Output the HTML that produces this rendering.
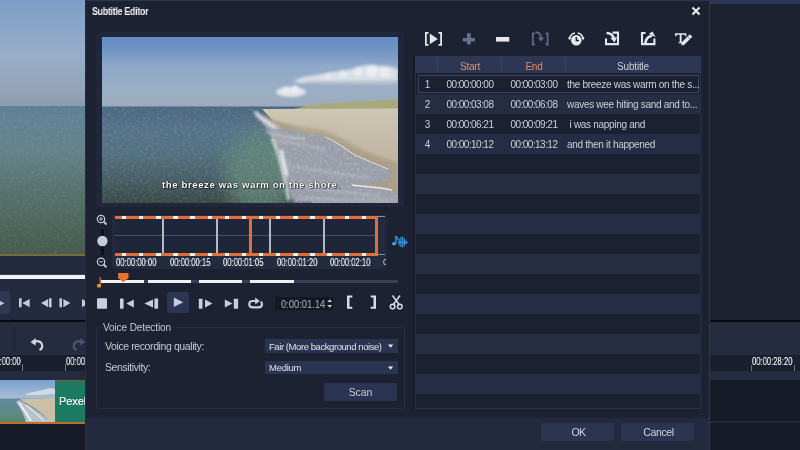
<!DOCTYPE html>
<html><head><meta charset="utf-8">
<style>
*{margin:0;padding:0;box-sizing:border-box}
html,body{width:800px;height:450px;overflow:hidden;background:#1c2030;font-family:"Liberation Sans",sans-serif}
.a{position:absolute}
.t{position:absolute;white-space:nowrap;line-height:1;will-change:transform}
</style></head><body>
<!-- LEFT BACKGROUND APP -->
<div class="a" style="left:0;top:0;width:85px;height:450px;background:#1b2030"></div>
<!-- left video -->
<svg class="a" style="left:0;top:0" width="85" height="256" viewBox="0 0 85 256">
  <defs>
    <linearGradient id="lsky" x1="0" y1="0" x2="0" y2="1">
      <stop offset="0" stop-color="#7e9ec8"/><stop offset="0.5" stop-color="#98aec8"/><stop offset="0.85" stop-color="#94a4b8"/><stop offset="1" stop-color="#8c9cb0"/>
    </linearGradient>
    <linearGradient id="lsea" x1="0" y1="0" x2="0" y2="1">
      <stop offset="0" stop-color="#5e7e94"/><stop offset="0.1" stop-color="#628294"/><stop offset="0.3" stop-color="#64828a"/><stop offset="0.56" stop-color="#56726e"/><stop offset="0.88" stop-color="#4a6056"/><stop offset="1" stop-color="#465a4e"/>
    </linearGradient>
  </defs>
  <rect width="85" height="107" fill="url(#lsky)"/>
  <rect y="106" width="85" height="150" fill="url(#lsea)"/>
  <rect y="106" width="85" height="150" fill="#fff" filter="url(#noise)" opacity="0.12"/>
  <rect y="254" width="85" height="2" fill="#7a6a3a"/>
</svg>
<div class="a" style="left:0;top:256px;width:85px;height:18px;background:#232a3e"></div>
<div class="a" style="left:0;top:274px;width:85px;height:1px;background:#3a4257"></div>
<div class="a" style="left:0;top:275px;width:85px;height:4px;background:#f2f2f4"></div>
<div class="a" style="left:0;top:279px;width:85px;height:41px;background:#242b3f"></div>
<div class="a" style="left:0;top:291px;width:10px;height:23px;background:#2e3853;border-radius:0 3px 3px 0"></div>
<div class="a" style="left:0;top:319.5px;width:85px;height:2px;background:#080a10"></div>
<div class="a" style="left:0;top:322px;width:85px;height:33px;background:#262c40"></div>
<div class="a" style="left:14px;top:326px;width:1px;height:26px;background:#1c2132"></div>
<div class="a" style="left:0;top:355px;width:85px;height:16px;background:#1a1f2e"></div>
<div class="a" style="left:0;top:371px;width:85px;height:9px;background:#252b3e"></div>
<div class="a" style="left:0;top:380px;width:85px;height:42px;background:#1d7a62"></div>
<div class="a" style="left:0;top:422px;width:85px;height:1.5px;background:#b8702e"></div>
<div class="a" style="left:0;top:379.5px;width:85px;height:1px;background:#7a5a3a"></div>
<div class="a" style="left:0;top:423.5px;width:85px;height:27px;background:#171b28"></div>


<!-- left controls -->
<svg class="a" style="left:0;top:285px" width="85" height="90" viewBox="0 285 85 90">
  <g fill="#c6cbda">
    <path d="M-4 299l8.5 4.2l-8.5 4.2z"/>
    <rect x="19" y="298.3" width="2.6" height="9" rx="0.5"/>
    <path d="M29.6 299v8.2l-7.2-4.1z"/>
    <path d="M41 303.1l7.2-4.1v8.2z"/>
    <rect x="49" y="298.3" width="2.6" height="9" rx="0.5"/>
    <rect x="59.4" y="298.3" width="2.6" height="9" rx="0.5"/>
    <path d="M63.4 299l7 4.1l-7 4.1z"/>
    <path d="M82 299l7 4.1l-7 4.1z"/>
  </g>
  <g fill="none" stroke="#d4d8e2" stroke-width="2.2">
    <path d="M34 342c3-1.5 7-1 8 2.5c0.8 2.5-0.5 4.5-2.5 5.5"/>
  </g>
  <path d="M30.5 342.3l5.2-4.2v7.5z" fill="#d4d8e2"/>
  <g fill="none" stroke="#4a5570" stroke-width="2.2">
    <path d="M82 342c-3-1.5-7-1-8 2.5c-0.8 2.5 0.5 4.5 2.5 5.5"/>
  </g>
  <path d="M85.5 342.3l-5.2-4.2v7.5z" fill="#4a5570"/>
  <rect x="22" y="364" width="1" height="7" fill="#6a7288"/>
  <rect x="65" y="364" width="1" height="7" fill="#6a7288"/>
</svg>
<div class="t" style="left:-9.5px;top:356.5px;font-size:10px;color:#dfe2e8;transform:scaleX(0.765);transform-origin:left;text-shadow:0 0 0.5px #dfe2e8">00:00:00</div>
<div class="t" style="left:66px;top:356.5px;font-size:10px;color:#dfe2e8;transform:scaleX(0.765);transform-origin:left;text-shadow:0 0 0.5px #dfe2e8">00:00:00</div>
<!-- left clip -->
<svg class="a" style="left:0;top:380px" width="55" height="42" viewBox="0 380 55 42">
  <defs>
    <linearGradient id="csky" x1="0" y1="0" x2="0" y2="1">
      <stop offset="0" stop-color="#78a0d2"/><stop offset="1" stop-color="#aebed2"/>
    </linearGradient>
    <linearGradient id="csea" x1="0" y1="0" x2="0" y2="1">
      <stop offset="0" stop-color="#5f8aa0"/><stop offset="0.6" stop-color="#5e8c88"/><stop offset="1" stop-color="#58866c"/>
    </linearGradient>
  </defs>
  <rect x="0" y="380" width="55" height="19" fill="url(#csky)"/>
  <path d="M26 394 C32 392 38 391 43 390 C47 388 52 388 55 389 L55 394 C45 395 35 395 26 395 Z" fill="#dfe4ec" opacity="0.8" filter="url(#b05)"/>
  <rect x="0" y="398.5" width="55" height="23.5" fill="url(#csea)"/>
  <path d="M20 399 L55 398 L55 422 L50 422 C44 414 34 407 22 401 Z" fill="#cbbfa4" filter="url(#b05)"/>
  <path d="M19 400 C28 405 40 412 51 422 L26 422 C24 415 21 408 16 402 Z" fill="#b8c0c8" filter="url(#b05)"/>
  <path d="M19 403 C23 408 27 414 31 421" stroke="#eef0f2" stroke-width="2" fill="none" filter="url(#b05)"/>
  <path d="M26 405 C32 410 38 415 44 421" stroke="#e4e8ec" stroke-width="1.2" fill="none" filter="url(#b05)"/>
</svg>
<div class="t" style="left:59px;top:396px;font-size:11px;color:#e6eeea;letter-spacing:-0.1px;text-shadow:0 0 0.4px #e6eeea">Pexels</div>

<!-- RIGHT BACKGROUND APP -->
<div class="a" style="left:710px;top:0;width:90px;height:4px;background:#2c3656"></div>
<div class="a" style="left:710px;top:4px;width:90px;height:316px;background:#1c2130"></div>
<div class="a" style="left:710px;top:319.5px;width:90px;height:2px;background:#080a10"></div>
<div class="a" style="left:710px;top:322px;width:90px;height:33px;background:#262c40"></div>
<div class="a" style="left:710px;top:355px;width:90px;height:16px;background:#1a1f2e"></div>
<div class="a" style="left:710px;top:371px;width:90px;height:9px;background:#252b3e"></div>
<div class="a" style="left:710px;top:380px;width:90px;height:70px;background:#161b28"></div>


<div class="t" style="left:752px;top:356.5px;font-size:10px;color:#dfe2e8;transform:scaleX(0.765);transform-origin:left;text-shadow:0 0 0.5px #dfe2e8">00:00:28:20</div>
<div class="a" style="left:751px;top:365px;width:1px;height:6px;background:#6a7288"></div>
<div class="a" style="left:794px;top:365px;width:1px;height:6px;background:#6a7288"></div>
<div class="a" style="left:710px;top:421px;width:90px;height:2px;background:#252b3c"></div>

<!-- DIALOG -->
<div class="a" style="left:85px;top:0;width:625px;height:450px;background:#1d2233;border-top:1.5px solid #2d3556;border-left:1px solid #262c44;border-right:1px solid #2e3656"></div>
<div class="t" style="left:92px;top:7px;font-size:10px;font-weight:bold;color:#f4f4f8;letter-spacing:-0.3px;transform:scaleX(0.88);transform-origin:left">Subtitle Editor</div>

<!-- video frame -->
<div class="a" style="left:96px;top:32px;width:308px;height:175px;background:#21263a;border-radius:3px"></div>
<svg class="a" style="left:102px;top:37px" width="296" height="166" viewBox="102 37 296 166">
  <defs>
    <linearGradient id="vsky" x1="0" y1="0" x2="0" y2="1">
      <stop offset="0" stop-color="#668ec4"/><stop offset="0.15" stop-color="#6c92c4"/><stop offset="0.4" stop-color="#8ea8ca"/><stop offset="0.75" stop-color="#9aaec4"/><stop offset="1" stop-color="#9eacbc"/>
    </linearGradient>
    <linearGradient id="vsea" x1="0" y1="0" x2="0" y2="1">
      <stop offset="0" stop-color="#4c6882"/><stop offset="0.25" stop-color="#56728a"/><stop offset="0.5" stop-color="#52707e"/><stop offset="0.75" stop-color="#485e66"/><stop offset="0.9" stop-color="#3e5050"/><stop offset="1" stop-color="#3a4a42"/>
    </linearGradient>
    <linearGradient id="vsand" x1="0" y1="0" x2="0" y2="1">
      <stop offset="0" stop-color="#cfc7b5"/><stop offset="0.4" stop-color="#c2b9a6"/><stop offset="1" stop-color="#b2a68c"/>
    </linearGradient>
    <filter id="b1" x="-20%" y="-50%" width="140%" height="200%"><feGaussianBlur stdDeviation="1.5"/></filter>
    <filter id="b2" x="-30%" y="-30%" width="160%" height="160%"><feGaussianBlur stdDeviation="4"/></filter>
    <filter id="b3" x="-50%" y="-50%" width="200%" height="200%"><feGaussianBlur stdDeviation="9"/></filter>
    <filter id="b05"><feGaussianBlur stdDeviation="0.7"/></filter>
    <filter id="noise" x="0" y="0" width="100%" height="100%">
      <feTurbulence type="fractalNoise" baseFrequency="0.35" numOctaves="2" seed="3"/>
      <feColorMatrix values="0 0 0 0 1  0 0 0 0 1  0 0 0 0 1  0 0 0 1.6 -0.75"/>
      <feComposite in2="SourceGraphic" operator="in"/>
    </filter>
    <filter id="noise2" x="0" y="0" width="100%" height="100%">
      <feTurbulence type="fractalNoise" baseFrequency="0.12 0.4" numOctaves="2" seed="7"/>
      <feColorMatrix values="0 0 0 0 0.1  0 0 0 0 0.15  0 0 0 0 0.25  0 0 0 -2.2 1.0"/>
      <feComposite in2="SourceGraphic" operator="in"/>
    </filter>
  </defs>
  <rect x="102" y="37" width="296" height="71" fill="url(#vsky)"/>
  <rect x="102" y="106.5" width="296" height="97" fill="url(#vsea)"/>
  <!-- lighter sea patch near foam -->
  <ellipse cx="262" cy="172" rx="38" ry="42" fill="#668a7a" opacity="0.75" filter="url(#b3)"/>
  <!-- clouds -->
  <g filter="url(#b1)" opacity="0.95">
    <path d="M293 81 C300 77 312 76 322 74 C332 71 345 71 352 69 C360 65 372 64 380 66 C390 66 398 68 398 70 L398 84 C380 85 340 84 300 83 Z" fill="#dde2ea"/>
    <circle cx="372" cy="71" r="6" fill="#f2f3f6"/>
    <circle cx="385" cy="72" r="5.5" fill="#eef0f4"/>
    <circle cx="358" cy="72" r="4.5" fill="#eef0f4"/>
    <circle cx="343" cy="74" r="4" fill="#eceef2"/>
    <circle cx="328" cy="76" r="3.5" fill="#e8ebf0"/>
    <path d="M305 83 C330 85 370 86 398 84 L398 80 C370 81 330 81 305 81 Z" fill="#b8c0cc"/>
    <ellipse cx="291" cy="92" rx="15" ry="5" fill="#e2e6ec"/>
    <circle cx="286" cy="90.5" r="4" fill="#eef0f4"/>
    <circle cx="295" cy="90" r="4.5" fill="#eef0f4"/>
  </g>
  <!-- dunes -->
  <path d="M292 109.5 C310 104 340 102 370 101 C385 100 395 99 398 99 L398 110 L292 110 Z" fill="#a9a87c" filter="url(#b05)"/>
  <!-- sand -->
  <path d="M262 109 L398 108.5 L398 203 L312 203 C302 170 292 140 262 109 Z" fill="url(#vsand)" filter="url(#b05)"/>
  <!-- wet sand -->
  <path d="M262 114 C275 122 292 126 312 128 C328 130 340 136 354 145 C367 152 380 157 398 162 L398 195 L300 195 Z" fill="#ab9f86" filter="url(#b1)"/>
  <path d="M295 127 C315 128 332 131 345 138 C360 146 380 150 398 158" stroke="#c4bba8" stroke-width="6" fill="none" filter="url(#b2)" opacity="0.6"/>
  <!-- foam -->
  <path d="M252 110 C262 118 268 124 278 128 C295 132 312 133 325 137 C338 142 346 150 355 155 C366 160 378 165 388 169 C393 173 393 179 386 182 C372 184 360 184 352 185 C366 187 380 187 392 190 C396 193 398 196 398 203 L294 203 C288 190 284 175 281 160 C278 145 268 128 252 110 Z" fill="#999eaa" filter="url(#b1)"/>
  <path d="M252 110 C262 118 268 124 278 128 C295 132 312 133 325 137 C338 142 346 150 355 155 C366 160 378 165 388 169 C393 173 393 179 386 182 C372 184 360 184 352 185 C366 187 380 187 392 190 C396 193 398 196 398 203 L294 203 C288 190 284 175 281 160 C278 145 268 128 252 110 Z" fill="#fff" filter="url(#noise)" opacity="0.3"/>
  <path d="M255 112 C262 118 268 124 276 128" stroke="#dfe3e8" stroke-width="3" fill="none" filter="url(#b1)"/>
  <path d="M272 138 C277 148 280 160 283 172 C285 180 287 190 289 200" stroke="#e4e8ec" stroke-width="2.5" fill="none" filter="url(#b1)"/>
  <path d="M352 185 C366 187 380 187 392 190" stroke="#e6e8ec" stroke-width="1.5" fill="none" filter="url(#b05)"/>
  <path d="M325 137 C338 142 346 150 355 155 C366 160 378 165 388 169" stroke="#d0d4dc" stroke-width="1.2" fill="none" filter="url(#b05)"/>
  <g stroke="#e8ebf0" fill="none" filter="url(#b1)" opacity="0.6">
    <path d="M256 116 C264 121 272 125 280 128" stroke-width="1.8"/>
    <path d="M266 132 C278 136 292 138 305 139" stroke-width="1.5"/>
    <path d="M275 140 C290 143 310 146 325 150" stroke-width="1"/>
    <path d="M288 165 C310 170 340 175 370 177" stroke-width="1"/>
    <path d="M292 185 C320 190 350 193 380 196" stroke-width="1.2"/>
    <path d="M300 198 C330 200 360 201 395 200" stroke-width="1"/>
  </g>
  <path d="M281 150 C283 160 285 168 287 176" stroke="#f4f5f7" stroke-width="3" fill="none" filter="url(#b1)"/>
  <!-- sea noise -->
  <path d="M102 107 L252 107 C268 128 278 145 281 160 C284 175 288 190 294 203 L102 203 Z" fill="#fff" filter="url(#noise)" opacity="0.18"/>
  <path d="M102 107 L252 107 C268 128 278 145 281 160 C284 175 288 190 294 203 L102 203 Z" fill="#fff" filter="url(#noise2)" opacity="0.5"/>
  
</svg>
<div class="t" style="left:162px;top:180px;font-size:9.6px;font-weight:bold;color:#fff;letter-spacing:0.6px;text-shadow:0 0 1px #000,0 0 1px #000,1px 1px 1px rgba(0,0,0,.5)">the breeze was warm on the shore.</div>

<!-- TABLE -->
<div class="a" style="left:413px;top:56px;width:2px;height:353px;background:#181c2a"></div>
<div class="a" style="left:415px;top:56px;width:286px;height:353px;background:#1c2132;border:1px solid #2a3148"></div>
<div class="a" style="left:415px;top:56px;width:286px;height:17px;background:#2d3754"></div>
<div class="a" style="left:416px;top:74px;width:284px;height:20px;background:#1c2132"></div>
<div class="a" style="left:416px;top:94px;width:284px;height:20px;background:#252d42"></div>
<div class="a" style="left:416px;top:114px;width:284px;height:20px;background:#1c2132"></div>
<div class="a" style="left:416px;top:134px;width:284px;height:20px;background:#252d42"></div>
<div class="a" style="left:416px;top:154px;width:284px;height:20px;background:#1c2132"></div>
<div class="a" style="left:416px;top:174px;width:284px;height:20px;background:#252d42"></div>
<div class="a" style="left:416px;top:194px;width:284px;height:20px;background:#1c2132"></div>
<div class="a" style="left:416px;top:214px;width:284px;height:20px;background:#252d42"></div>
<div class="a" style="left:416px;top:234px;width:284px;height:20px;background:#1c2132"></div>
<div class="a" style="left:416px;top:254px;width:284px;height:20px;background:#252d42"></div>
<div class="a" style="left:416px;top:274px;width:284px;height:20px;background:#1c2132"></div>
<div class="a" style="left:416px;top:294px;width:284px;height:20px;background:#252d42"></div>
<div class="a" style="left:416px;top:314px;width:284px;height:20px;background:#1c2132"></div>
<div class="a" style="left:416px;top:334px;width:284px;height:20px;background:#252d42"></div>
<div class="a" style="left:416px;top:354px;width:284px;height:20px;background:#1c2132"></div>
<div class="a" style="left:416px;top:374px;width:284px;height:20px;background:#252d42"></div>
<div class="a" style="left:416px;top:394px;width:284px;height:13px;background:#1c2132"></div>
<div class="a" style="left:418px;top:75px;width:281px;height:18px;border:1px solid #3b4563"></div>
<div class="a" style="left:437px;top:57px;width:1px;height:15px;background:#3a4464"></div>
<div class="a" style="left:501px;top:57px;width:1px;height:15px;background:#3a4464"></div>
<div class="a" style="left:565px;top:57px;width:1px;height:15px;background:#3a4464"></div>
<div class="t" style="left:438px;top:62px;width:64px;text-align:center;font-size:10px;color:#e48c66;letter-spacing:-0.2px">Start</div>
<div class="t" style="left:502px;top:62px;width:64px;text-align:center;font-size:10px;color:#e48c66;letter-spacing:-0.2px">End</div>
<div class="t" style="left:566px;top:62px;width:134px;text-align:center;font-size:10px;color:#c8d0dc;letter-spacing:-0.2px">Subtitle</div>
<div class="t" style="left:416px;top:80px;width:23px;text-align:center;font-size:10px;color:#c8d0dc">1</div>
<div class="t" style="left:438px;top:80px;width:64px;text-align:center;font-size:10px;color:#c8d0dc;letter-spacing:-0.55px">00:00:00:00</div>
<div class="t" style="left:502px;top:80px;width:64px;text-align:center;font-size:10px;color:#c8d0dc;letter-spacing:-0.55px">00:00:03:00</div>
<div class="t" style="left:567px;top:80px;font-size:10px;color:#c8d0dc;letter-spacing:-0.3px;white-space:pre">the breeze was warm on the s...</div>
<div class="t" style="left:416px;top:100px;width:23px;text-align:center;font-size:10px;color:#c8d0dc">2</div>
<div class="t" style="left:438px;top:100px;width:64px;text-align:center;font-size:10px;color:#c8d0dc;letter-spacing:-0.55px">00:00:03:08</div>
<div class="t" style="left:502px;top:100px;width:64px;text-align:center;font-size:10px;color:#c8d0dc;letter-spacing:-0.55px">00:00:06:08</div>
<div class="t" style="left:567px;top:100px;font-size:10px;color:#c8d0dc;letter-spacing:-0.3px;white-space:pre">waves wee hiting sand and to...</div>
<div class="t" style="left:416px;top:120px;width:23px;text-align:center;font-size:10px;color:#c8d0dc">3</div>
<div class="t" style="left:438px;top:120px;width:64px;text-align:center;font-size:10px;color:#c8d0dc;letter-spacing:-0.55px">00:00:06:21</div>
<div class="t" style="left:502px;top:120px;width:64px;text-align:center;font-size:10px;color:#c8d0dc;letter-spacing:-0.55px">00:00:09:21</div>
<div class="t" style="left:567px;top:120px;font-size:10px;color:#c8d0dc;letter-spacing:-0.3px;white-space:pre"> i was napping and</div>
<div class="t" style="left:416px;top:140px;width:23px;text-align:center;font-size:10px;color:#c8d0dc">4</div>
<div class="t" style="left:438px;top:140px;width:64px;text-align:center;font-size:10px;color:#c8d0dc;letter-spacing:-0.55px">00:00:10:12</div>
<div class="t" style="left:502px;top:140px;width:64px;text-align:center;font-size:10px;color:#c8d0dc;letter-spacing:-0.55px">00:00:13:12</div>
<div class="t" style="left:567px;top:140px;font-size:10px;color:#c8d0dc;letter-spacing:-0.3px;white-space:pre">and then it happened</div>



<!-- TOOLBAR ICONS -->
<svg class="a" style="left:420px;top:28px" width="280" height="22" viewBox="420 28 280 22">
  <g fill="#e4e6ee">
    <!-- [>] -->
    <path d="M425 32h3.5v1.8h-1.7v10.2h1.7v1.8h-3.5z"/>
    <path d="M442 32h-3.5v1.8h1.7v10.2h-1.7v1.8h3.5z"/>
    <path d="M429.8 33.5l8 5.4l-8 5.4z"/>
    <!-- minus -->
    <rect x="496" y="37" width="13.3" height="4.6"/>
  </g>
  <g fill="#66718c">
    <path d="M467 33.3h3.8v4.6h4.1v3.6h-4.1v3.1h-3.8v-3.1h-4.2v-3.6h4.2z"/>
  </g>
  <g fill="none" stroke="#5f6a85" stroke-width="1.8">
    <path d="M534.8 33.5h-2v11h2M545.6 33.5h2v11h-2"/>
    <path d="M535.5 32.5c3.5-0.5 5.5 1.5 5.5 5.5"/>
  </g>
  <path fill="#5f6a85" d="M537.8 37.5h6.4l-3.2 4z"/>
  <!-- alarm clock -->
  <g>
    <circle cx="576.3" cy="40.2" r="5.3" fill="#e4e6ee"/>
    <path d="M576.3 37v3.5h2.6" stroke="#1d2233" stroke-width="1.4" fill="none"/>
    <path d="M569.5 38.5c0.8-3 3-5 5.5-5.5" stroke="#e4e6ee" stroke-width="1.7" fill="none"/>
    <path d="M583.2 38.5c-0.8-3-3-5-5.5-5.5" stroke="#e4e6ee" stroke-width="1.7" fill="none"/>
    <path d="M568 37.5l3.3 0.3l-1.9 2.4z M584.6 37.5l-3.3 0.3l1.9 2.4z" fill="#e4e6ee"/>
  </g>
  <!-- import -->
  <g fill="none" stroke="#e4e6ee" stroke-width="2.1">
    <path d="M606 38.5v5.6h12v-11.5h-5.5"/>
    <path d="M606.5 33c3.5 0 6.5 2 7.5 6" stroke-width="2.4"/>
  </g>
  <path fill="#e4e6ee" d="M610.3 37.8l6.8 -0.6l-2.6 5.4z"/>
  <!-- export -->
  <g fill="none" stroke="#e4e6ee" stroke-width="2.1">
    <path d="M645.5 33h-3.5v11.1h12.4v-5.6"/>
    <path d="M645.5 43.2c0.3-4.2 2.6-6.8 6.5-7.4" stroke-width="2.6"/>
  </g>
  <path fill="#e4e6ee" d="M648.8 33.8l3.8-2.2l3 5.6z"/>
  <!-- T pen -->
  <g fill="#e4e6ee">
    <path d="M675 33.2h11.3v3h-1.2l-0.5-1.5h-3v7.2l1.3 0.6v0.7h-4.5v-0.7l1.3-0.6v-7.2h-3l-0.5 1.5h-1.2z"/>
  </g>
  <path d="M682.3 44.3l8.8-8.8" stroke="#e4e6ee" stroke-width="3.6" fill="none"/>
  <path d="M688 37l2.2 2.2" stroke="#1d2233" stroke-width="0.8" fill="none" opacity="0.6"/>
  <path d="M681 45.5l1.2-3.2l2 2z" fill="#e4e6ee"/>
</svg>
<!-- close X -->
<svg class="a" style="left:690px;top:5px" width="12" height="12" viewBox="0 0 12 12">
  <path d="M2.5 2.5l7 7M9.5 2.5l-7 7" stroke="#f0f0f4" stroke-width="2"/>
</svg>

<!-- TIMELINE -->
<div class="a" style="left:112px;top:215px;width:275px;height:54px;background:#242b3f;border-radius:0 0 5px 5px"></div>
<div class="a" style="left:115px;top:219px;width:262px;height:34px;background:#20263a"></div>
<div class="a" style="left:115px;top:235px;width:262px;height:1px;background:#495168"></div>
<div class="a" style="left:115px;top:215.5px;width:262px;height:3.5px;background:repeating-linear-gradient(90deg,#e0703a 0,#e0703a 7px,#f0f0f2 7px,#f0f0f2 11.3px,#e0703a 11.3px,#e0703a 17.12px)"></div>
<div class="a" style="left:115px;top:252.5px;width:262px;height:3.5px;background:repeating-linear-gradient(90deg,#e0703a 0,#e0703a 7px,#f0f0f2 7px,#f0f0f2 11.3px,#e0703a 11.3px,#e0703a 17.12px)"></div>
<div class="a" style="left:162px;top:219px;width:2px;height:34px;background:#b4b8c4"></div>
<div class="a" style="left:216px;top:219px;width:2px;height:34px;background:#b4b8c4"></div>
<div class="a" style="left:269px;top:219px;width:2px;height:34px;background:#b4b8c4"></div>
<div class="a" style="left:323px;top:219px;width:2px;height:34px;background:#b4b8c4"></div>
<div class="a" style="left:248.5px;top:215.5px;width:3.5px;height:40.5px;background:#e0703a"></div>
<div class="a" style="left:374.5px;top:215.5px;width:3.5px;height:40.5px;background:#e0703a"></div>
<div class="a" style="left:378px;top:216px;width:7px;height:1px;background:#8a90a0"></div>
<div class="a" style="left:378px;top:254px;width:7px;height:1px;background:#8a90a0"></div>
<div class="a" style="left:385px;top:216px;width:1px;height:39px;background:#1c2132"></div>
<div class="t" style="left:116px;top:257.5px;font-size:10px;color:#e2e5ea;letter-spacing:0;transform:scaleX(0.765);transform-origin:left;text-shadow:0 0 0.5px #e2e5ea">00:00:00:00</div>
<div class="t" style="left:169.5px;top:257.5px;font-size:10px;color:#e2e5ea;letter-spacing:0;transform:scaleX(0.765);transform-origin:left;text-shadow:0 0 0.5px #e2e5ea">00:00:00:15</div>
<div class="t" style="left:223px;top:257.5px;font-size:10px;color:#e2e5ea;letter-spacing:0;transform:scaleX(0.765);transform-origin:left;text-shadow:0 0 0.5px #e2e5ea">00:00:01:05</div>
<div class="t" style="left:276.5px;top:257.5px;font-size:10px;color:#e2e5ea;letter-spacing:0;transform:scaleX(0.765);transform-origin:left;text-shadow:0 0 0.5px #e2e5ea">00:00:01:20</div>
<div class="t" style="left:330px;top:257.5px;font-size:10px;color:#e2e5ea;letter-spacing:0;transform:scaleX(0.765);transform-origin:left;text-shadow:0 0 0.5px #e2e5ea">00:00:02:10</div>
<div class="a" style="left:383px;top:257px;width:3px;height:10px;overflow:hidden"><div class="t" style="left:0;top:0.5px;font-size:9px;color:#d2d6de">0</div></div>

<!-- zoom slider -->
<svg class="a" style="left:92px;top:208px" width="20" height="64" viewBox="92 208 20 64">
  <g fill="none" stroke="#c8ccd8">
    <circle cx="101" cy="219" r="3.7" stroke-width="1.2"/>
    <path d="M103.7 221.7l2.8 2.8" stroke-width="1.9"/>
    <path d="M99 219h4M101 217v4" stroke-width="0.9"/>
    <circle cx="101" cy="261.8" r="3.7" stroke-width="1.2"/>
    <path d="M103.7 264.5l2.8 2.8" stroke-width="1.9"/>
    <path d="M99 261.8h4" stroke-width="0.9"/>
  </g>
  <rect x="101" y="229" width="3" height="26" fill="#0c0f18"/>
  <circle cx="102.4" cy="241" r="5.2" fill="#c6cad8"/>
</svg>
<!-- audio icon -->
<svg class="a" style="left:390px;top:232px" width="20" height="18" viewBox="390 232 20 18">
  <g fill="#3aa6ee">
    <ellipse cx="394" cy="243.8" rx="2" ry="1.7"/>
    <rect x="395.3" y="236" width="1.2" height="8"/>
    <path d="M395.5 235.5c1.5 0.8 3 2.2 3.4 4.6l-1 0.2c-0.5-1.6-1.4-2.6-2.4-3.2z"/>
    <rect x="398.6" y="239" width="1" height="6.5"/>
    <rect x="400.4" y="237" width="1.1" height="10"/>
    <rect x="402.2" y="236.5" width="1.1" height="11"/>
    <rect x="404" y="238.5" width="1" height="7.5"/>
    <rect x="405.6" y="240.5" width="1" height="3.5"/>
    <rect x="398" y="241.8" width="10" height="0.9"/>
  </g>
</svg>

<!-- SCRUB BAR -->
<div class="a" style="left:101px;top:280px;width:297px;height:3px;background:#363f57"></div>
<div class="a" style="left:101px;top:279.5px;width:43px;height:3.5px;background:#f2f2f4"></div>
<div class="a" style="left:148px;top:279.5px;width:43px;height:3.5px;background:#f2f2f4"></div>
<div class="a" style="left:199px;top:279.5px;width:43px;height:3.5px;background:#f2f2f4"></div>
<div class="a" style="left:250px;top:279.5px;width:44px;height:3.5px;background:#f2f2f4"></div>
<svg class="a" style="left:95px;top:270px" width="40" height="20" viewBox="95 270 40 20">
  <path d="M118 273h10.5v5l-5.2 4.2l-5.3-4.2z" fill="#e8702e"/>
  <path d="M100.2 277v7.5" stroke="#e8902e" stroke-width="1"/>
  <rect x="97" y="284" width="4" height="3.5" rx="1" fill="#e8902e"/>
</svg>

<!-- CONTROLS -->
<div class="a" style="left:167px;top:291.5px;width:22px;height:21.5px;background:#2c3654;border-radius:3px"></div>
<svg class="a" style="left:90px;top:290px" width="320" height="26" viewBox="90 290 320 26">
  <g fill="#c9cedc">
    <rect x="97" y="298.2" width="10" height="10.5" rx="0.8"/>
    <rect x="120" y="298.5" width="3.6" height="10.2" rx="0.6"/>
    <path d="M133.8 299.4v8.1l-7.5-4.05z"/>
    <path d="M144.4 303.45l8.6-4.05v8.1z"/>
    <rect x="154.4" y="298.5" width="3.7" height="10.2" rx="0.6"/>
    <path d="M173.8 297.5l9.3 4.7l-9.3 4.7z"/>
    <rect x="198.8" y="298.7" width="3.7" height="10" rx="0.6"/>
    <path d="M205 299.4l7.5 4.05l-7.5 4.05z"/>
    <path d="M224.8 299.4l7.7 4.05l-7.7 4.05z"/>
    <rect x="233.8" y="298.7" width="4.3" height="10" rx="0.6"/>
  </g>
  <g fill="none" stroke="#c9cedc" stroke-width="2.1">
    <path d="M256 301h-3.2c-2.3 0-3.6 1.4-3.6 3.2s1.3 3.2 3.6 3.2h5.6c2.3 0 3.6-1.4 3.6-3.2c0-1.1-0.5-2-1.3-2.6"/>
  </g>
  <path d="M255.2 297.6l4.6 3.4l-4.6 3.4z" fill="#c9cedc"/>
  <g fill="#d8dce6">
    <path d="M347 295.5h5.3v2h-2.8v9.2h2.8v2h-5.3z"/>
    <path d="M376 295.5h-5.3v2h2.8v9.2h-2.8v2h5.3z"/>
  </g>
  <g fill="none" stroke="#d8dce6" stroke-width="1.5">
    <path d="M392.5 295.5l7 9.5M400 295.5l-7 9.5"/>
    <circle cx="392.6" cy="306.6" r="2.3"/>
    <circle cx="399.8" cy="306.6" r="2.3"/>
  </g>
</svg>
<div class="a" style="left:275px;top:297px;width:58px;height:13px;background:#141823"></div>
<div class="t" style="left:280.5px;top:298.5px;font-size:10.5px;color:#b8bcc8;letter-spacing:0;transform:scaleX(0.89);transform-origin:left">0:00:01.14</div>
<svg class="a" style="left:326px;top:298px" width="7" height="11" viewBox="0 0 7 11">
  <path d="M3.7 1.2l2.4 2.8h-4.8z M3.7 9.8l2.4-2.8h-4.8z" fill="#c8ccd8"/>
</svg>

<!-- VOICE DETECTION -->
<div class="a" style="left:96px;top:327px;width:309px;height:82px;border:1px solid #262d42;border-radius:3px"></div>
<div class="a" style="left:101px;top:322px;width:74px;height:10px;background:#1d2233"></div>
<div class="t" style="left:103px;top:322.5px;font-size:10px;color:#c4c8d4;letter-spacing:-0.1px">Voice Detection</div>
<div class="t" style="left:105px;top:340.5px;font-size:10.5px;color:#c4c8d4;letter-spacing:-0.4px">Voice recording quality:</div>
<div class="t" style="left:105px;top:361.5px;font-size:10.5px;color:#c4c8d4;letter-spacing:-0.4px">Sensitivity:</div>
<div class="a" style="left:265px;top:339px;width:132.5px;height:13.5px;background:#2a3350"></div>
<div class="a" style="left:265px;top:361px;width:132.5px;height:12.5px;background:#2a3350"></div>
<div class="t" style="left:268.5px;top:341.5px;font-size:9.5px;color:#dfe2ea;letter-spacing:-0.43px">Fair (More background noise)</div>
<div class="t" style="left:268.5px;top:363px;font-size:9.5px;color:#dfe2ea;letter-spacing:-0.25px">Medium</div>
<svg class="a" style="left:386px;top:342px" width="10" height="32" viewBox="0 0 10 32">
  <path d="M2 2.4h5.2l-2.6 3.3z M2 24.4h5.2l-2.6 3.3z" fill="#e8eaf0"/>
</svg>
<div class="a" style="left:323.5px;top:382.5px;width:73px;height:18px;background:#2a3350;border-radius:1px"></div>
<div class="t" style="left:323.5px;top:386.5px;width:73px;text-align:center;font-size:10.5px;color:#c8ccd8;letter-spacing:-0.1px">Scan</div>

<!-- footer -->
<div class="a" style="left:86px;top:418px;width:623px;height:32px;background:#232a3d"></div>
<div class="a" style="left:541px;top:423px;width:73px;height:18px;background:#2b3550;border-radius:2px"></div>
<div class="a" style="left:621px;top:423px;width:73px;height:18px;background:#2b3550;border-radius:2px"></div>
<div class="t" style="left:542px;top:427px;width:73px;text-align:center;font-size:10.5px;color:#d0d4e0;letter-spacing:-0.6px">OK</div>
<div class="t" style="left:622px;top:427px;width:73px;text-align:center;font-size:10.5px;color:#d0d4e0;letter-spacing:-0.4px">Cancel</div>
</body></html>
